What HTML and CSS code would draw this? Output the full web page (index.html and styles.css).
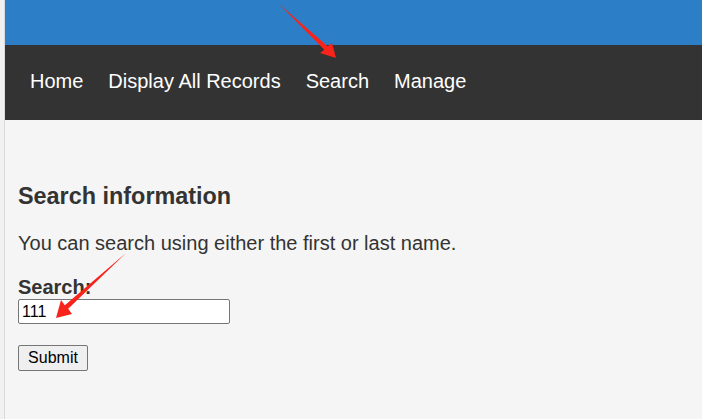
FILE: index.html
```html
<!DOCTYPE html>
<html>
<head>
<meta charset="utf-8">
<link rel="stylesheet" href="styles.css">
</head>
<body>
<div class="page">
  <div class="strip"></div>
  <div class="main">
    <header class="topbar"></header>
    <nav class="nav">
      <a href="#">Home</a>
      <a href="#">Display All Records</a>
      <a href="#">Search</a>
      <a href="#">Manage</a>
    </nav>
    <section class="content">
      <h2 class="title">Search information</h2>
      <p class="desc">You can search using either the first or last name.</p>
      <form class="form">
        <label class="label" for="q">Search:</label>
        <input class="field" id="q" type="text" value="111">
        <button class="btn" type="button">Submit</button>
      </form>
    </section>
  </div>
</div>
<svg class="marks" width="702" height="419" viewBox="0 0 702 419">
  <polygon fill="#f8231b" points="279,4 327.7,46.2 332,43 336,58 320,53 324.3,49.8"/>
  <polygon fill="#f8231b" points="126,253 64.8,305.2 61,300 56,318 72,314 68.2,308.8"/>
</svg>
</body>
</html>
```
FILE: styles.css
```css
html, body {
  margin: 0;
  padding: 0;
  height: 100%;
}
body {
  font-family: "Liberation Sans", Arial, sans-serif;
  background: #f5f5f5;
  color: #333;
  position: relative;
  overflow: hidden;
}
.page {
  display: flex;
  min-height: 419px;
}
.strip {
  width: 4px;
  background: #f1f1f1;
  border-right: 1px solid #dadada;
  flex-shrink: 0;
}
.main {
  flex: 1;
  display: flex;
  flex-direction: column;
}
.topbar {
  height: 45px;
  background: #2c7ec6;
}
.nav {
  height: 75px;
  box-sizing: border-box;
  padding-bottom: 3px;
  background: #333333;
  display: flex;
  align-items: center;
  gap: 25px;
  padding-left: 25px;
}
.nav a {
  color: #fff;
  text-decoration: none;
  font-size: 20px;
  line-height: 24px;
}
.content {
  padding: 62px 13px 0;
}
.title {
  margin: 0;
  font-size: 23.4px;
  line-height: 28px;
  font-weight: bold;
}
.desc {
  margin: 21px 0 0;
  font-size: 20px;
  line-height: 24px;
}
.form {
  margin-top: 20px;
  display: flex;
  flex-direction: column;
  align-items: flex-start;
}
.label {
  font-weight: bold;
  font-size: 20px;
  line-height: 24px;
}
.field {
  margin: 0;
  width: 212px;
  height: 25px;
  box-sizing: border-box;
  border: 1px solid #767676;
  border-radius: 2px;
  padding: 1px 3px;
  font-family: "Liberation Sans", Arial, sans-serif;
  font-size: 16px;
  color: #000;
  background: #fff;
}
.btn {
  margin-top: 21px;
  width: 70px;
  height: 26px;
  box-sizing: border-box;
  border: 1px solid #767676;
  border-radius: 2px;
  background: #efefef;
  font-family: "Liberation Sans", Arial, sans-serif;
  font-size: 16px;
  color: #000;
  padding: 0;
}
.marks {
  position: absolute;
  left: 0;
  top: 0;
  pointer-events: none;
}
```
